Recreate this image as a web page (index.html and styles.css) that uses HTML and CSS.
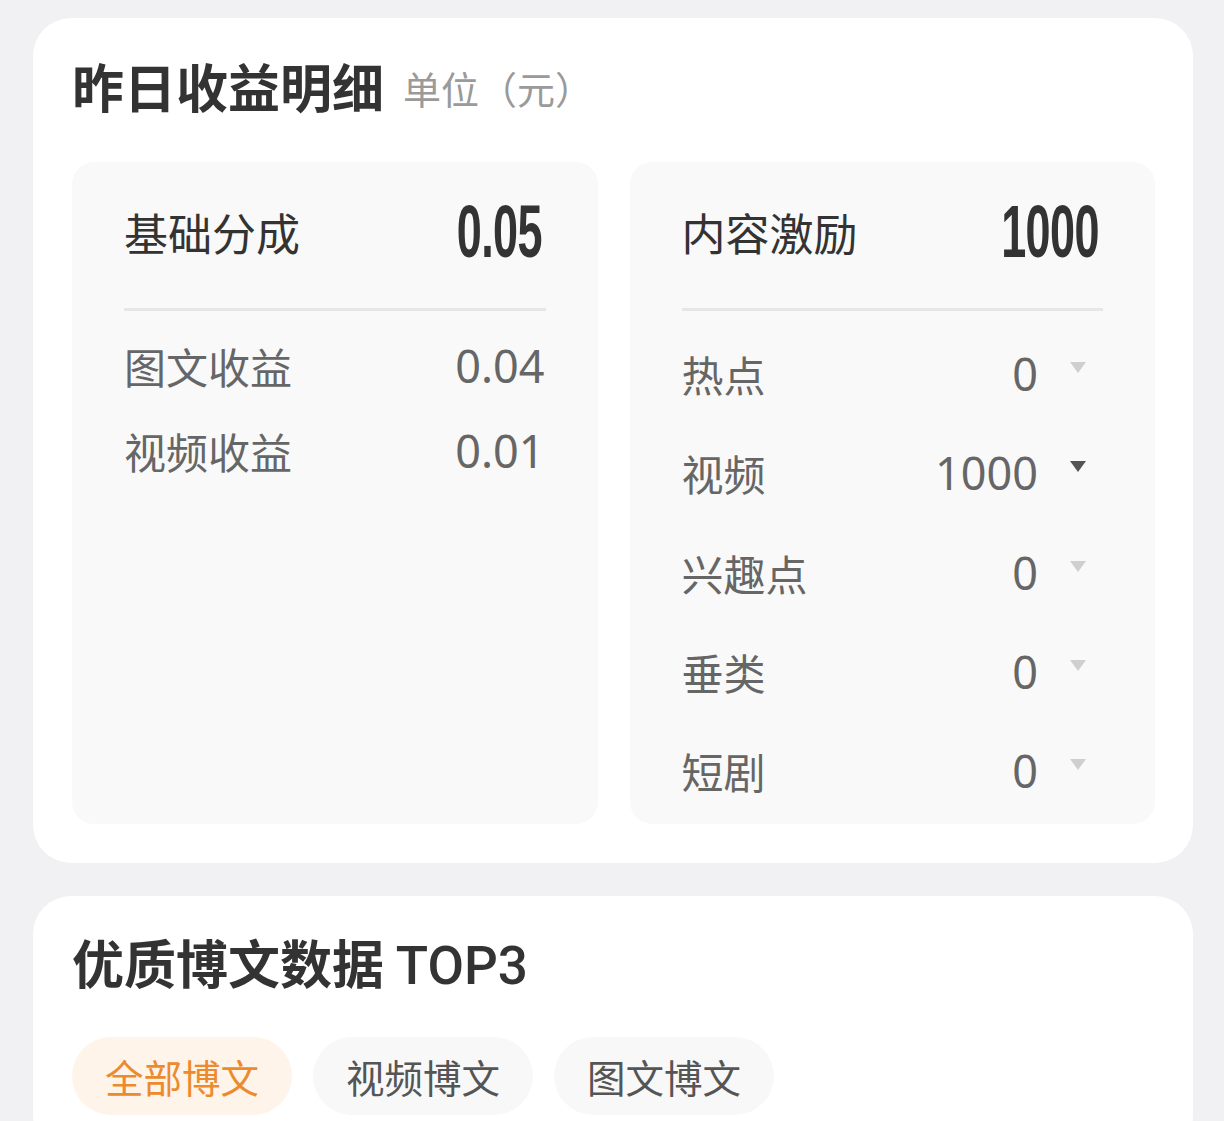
FILE: index.html
```html
<!DOCTYPE html>
<html lang="zh-CN">
<head>
<meta charset="utf-8">
<title>昨日收益明细</title>
<link rel="stylesheet" href="styles.css">
</head>
<body>
<div class="page">
  <section class="card">
    <h2 class="card-title"><span class="title-text">昨日收益明细</span><span class="unit">单位（元）</span></h2>
    <div class="boxes">
      <div class="box">
        <div class="box-head">
          <span class="head-label">基础分成</span>
          <span class="head-value"><span class="cond">0.05</span></span>
        </div>
        <div class="divider"></div>
        <ul class="rows rows-left">
          <li class="row"><span class="row-label">图文收益</span><span class="row-value">0.04</span></li>
          <li class="row"><span class="row-label">视频收益</span><span class="row-value">0.01</span></li>
        </ul>
      </div>
      <div class="box">
        <div class="box-head">
          <span class="head-label">内容激励</span>
          <span class="head-value"><span class="cond">1000</span></span>
        </div>
        <div class="divider"></div>
        <ul class="rows rows-right">
          <li class="row"><span class="row-label">热点</span><span class="row-end"><span class="row-value">0</span><span class="caret"></span></span></li>
          <li class="row"><span class="row-label">视频</span><span class="row-end"><span class="row-value">1000</span><span class="caret caret-dark"></span></span></li>
          <li class="row"><span class="row-label">兴趣点</span><span class="row-end"><span class="row-value">0</span><span class="caret"></span></span></li>
          <li class="row"><span class="row-label">垂类</span><span class="row-end"><span class="row-value">0</span><span class="caret"></span></span></li>
          <li class="row"><span class="row-label">短剧</span><span class="row-end"><span class="row-value">0</span><span class="caret"></span></span></li>
        </ul>
      </div>
    </div>
  </section>

  <section class="card">
    <h2 class="card-title"><span class="title-text">优质博文数据 <span class="latin">TOP3</span></span></h2>
    <div class="tabs">
      <span class="tab tab-active">全部博文</span>
      <span class="tab">视频博文</span>
      <span class="tab">图文博文</span>
    </div>
  </section>
</div>
</body>
</html>
```
FILE: styles.css
```css
* { box-sizing: border-box; }
html, body {
  margin: 0;
  padding: 0;
  background: #f1f1f3;
  font-family: "Noto Sans", "Noto Sans CJK SC", sans-serif;
  color: #333;
}
.page {
  padding: 18px 31px 0 33px;
  display: flex;
  flex-direction: column;
  gap: 33px;
}
.card {
  background: #fff;
  border-radius: 38px;
  padding: 32px 38px 39px 39px;
}
.card-title {
  margin: 0;
  height: 72px;
  display: flex;
  align-items: center;
  font-weight: 400;
  white-space: nowrap;
}
.title-text {
  font-size: 52px;
  line-height: 72px;
  font-weight: 700;
  color: #333;
  font-family: "Noto Sans CJK SC", sans-serif;
}
.latin {
  font-family: "Roboto", sans-serif;
  font-weight: 500;
  font-size: 53px;
}
.unit {
  font-size: 38px;
  line-height: 50px;
  font-weight: 400;
  color: #9a9a9a;
  margin-left: 19px;
  margin-top: 4px;
  font-family: "Noto Sans CJK SC", sans-serif;
}
.boxes {
  margin-top: 40px;
  display: grid;
  grid-template-columns: 1fr 1fr;
  gap: 32px;
}
.box {
  background: #f9f9f9;
  border-radius: 22px;
  padding: 0 52px 4px 52px;
}
.box-head {
  height: 139px;
  display: flex;
  align-items: center;
  justify-content: space-between;
  margin-bottom: 7px;
}
.head-label {
  font-size: 44px;
  color: #333;
  font-family: "Noto Sans CJK SC", sans-serif;
}
.head-value {
  display: inline-block;
  font-family: "Liberation Sans", sans-serif;
  font-weight: 700;
  font-size: 75px;
  line-height: 1;
  color: #333;
  margin-right: 4px;
}
.cond {
  display: inline-block;
  transform: scaleX(0.6);
  transform-origin: right center;
  letter-spacing: -1px;
}
.divider {
  height: 3px;
  background: #e6e6e6;
}
.rows {
  list-style: none;
  margin: 0;
  padding: 12px 0 0 0;
}
.row {
  display: flex;
  align-items: center;
  justify-content: space-between;
  color: #666;
}
.rows-left .row { height: 85px; }
.rows-right .row { height: 99.3px; padding-right: 17px; }
.rows-right { padding-top: 13px; }
.row-label {
  font-size: 42px;
  font-family: "Noto Sans CJK SC", sans-serif;
  color: #666;
}
.row-value {
  font-size: 45px;
  font-family: "Noto Sans", sans-serif;
  color: #666;
  line-height: 1;
}
.rows-left .row-value { margin-right: 1px; }
.row-end {
  display: flex;
  align-items: center;
}
.caret {
  width: 0;
  height: 0;
  margin-left: 32px;
  margin-top: -12px;
  border-left: 8.5px solid transparent;
  border-right: 8.5px solid transparent;
  border-top: 11px solid #cfcfcf;
}
.caret-dark { border-top-color: #555; }

.tabs {
  margin-top: 37px;
  display: flex;
  gap: 21px;
}
.tab {
  height: 78px;
  padding: 0 33px;
  border-radius: 39px;
  background: #f8f8f8;
  color: #555;
  font-size: 38.5px;
  font-family: "Noto Sans CJK SC", sans-serif;
  display: flex;
  align-items: center;
}
.tab-active {
  background: #fff4e9;
  color: #ec8a2e;
}
```
